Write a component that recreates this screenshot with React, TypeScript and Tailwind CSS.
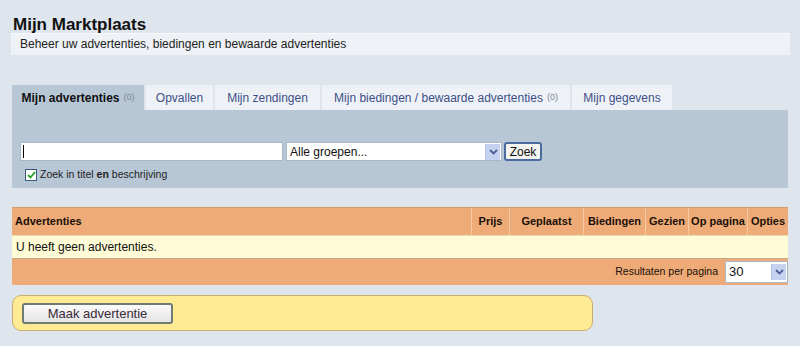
import React from 'react';

const tabs = [
    {label: 'Mijn advertenties', count: '(0)', width: 'w-[132px]', active: true},
    {label: 'Opvallen', width: 'w-[67px]'},
    {label: 'Mijn zendingen', width: 'w-[105px]'},
    {label: 'Mijn biedingen / bewaarde advertenties', count: '(0)', width: 'w-[248px]'},
    {label: 'Mijn gegevens', width: 'w-[100px]'},
];

const columns = [
    {label: 'Prijs', width: 'w-[38px]'},
    {label: 'Geplaatst', width: 'w-[74px]'},
    {label: 'Biedingen', width: 'w-[62px]'},
    {label: 'Gezien', width: 'w-[43px]'},
    {label: 'Op pagina', width: 'w-[59px]'},
    {label: 'Opties', width: 'w-[40px]'},
];

function SelectArrow() {
    return (
        <span className="w-[15px] h-[16px] flex items-center justify-center bg-[#c6d3f0] border-l border-[#b3c3e6]">
            <svg width="9" height="6" viewBox="0 0 9 6">
                <path d="M1 1 L4.5 4.5 L8 1" stroke="#4b5f99" strokeWidth="1.8" fill="none"/>
            </svg>
        </span>
    );
}

export default function App() {
    return (
        <div
            className="w-[800px] h-[346px] bg-[#dfe5ed] overflow-hidden text-black"
            style={{fontFamily: '"Liberation Sans", Arial, sans-serif'}}
        >
            <div className="pl-[13px] pt-[15px] h-[33px] text-[17px] font-bold leading-[20px] text-[#111]">
                Mijn Marktplaats
            </div>
            <div className="ml-[11px] w-[779px] h-[22px] bg-[#eef1f5] border-t border-[#f7f9fb] pl-[9px] text-[12px] leading-[20px] text-[#222]">
                Beheer uw advertenties, biedingen en bewaarde advertenties
            </div>

            <div className="ml-[12px] w-[776px] mt-[30px]">
                <div className="flex gap-[2px] h-[25px]">
                    {tabs.map(tab => (
                        <div
                            key={tab.label}
                            className={`${tab.width} h-[25px] flex items-center justify-center text-[12px] ${tab.active ? 'bg-[#b8c7d6] font-bold text-[#111]' : 'bg-[#eef2f6] text-[#3d4f88]'}`}
                        >
                            {tab.label}
                            {tab.count && (
                                <span className="ml-[4px] text-[9px] font-normal text-[#7d8794]">{tab.count}</span>
                            )}
                        </div>
                    ))}
                </div>
                <div className="h-[78px] bg-[#b8c7d6] pt-[32px] pl-[8px]">
                    <div className="flex items-center h-[19px]">
                        <div className="w-[263px] h-[19px] bg-white border border-[#a9b7c6] flex items-center pl-[2px]">
                            <span className="w-px h-[13px] bg-black"/>
                        </div>
                        <div className="ml-[3px] w-[216px] h-[19px] bg-white border border-[#a9b7c6] flex items-center justify-between pr-px">
                            <span className="pl-[3px] text-[12px] text-[#111]">Alle groepen...</span>
                            <SelectArrow/>
                        </div>
                        <button className="ml-[2px] w-[38px] h-[19px] bg-[#f3f3f0] border-2 border-[#4b6ba0] rounded-[3px] text-[12px] leading-[14px] text-[#111]">
                            Zoek
                        </button>
                    </div>
                    <div className="flex items-center mt-[7px] pl-[5px] h-[13px]">
                        <span className="w-[12px] h-[12px] bg-white border border-[#3a5a7a] flex items-center justify-center">
                            <svg width="9" height="8" viewBox="0 0 9 8">
                                <path d="M1 4 L3.5 6.5 L8 1" stroke="#21a121" strokeWidth="1.8" fill="none"/>
                            </svg>
                        </span>
                        <span className="ml-[3px] text-[10.5px] text-[#222]">
                            Zoek in titel <b>en</b> beschrijving
                        </span>
                    </div>
                </div>

                <div className="mt-[19px] border-t border-[#d49a6a]">
                    <div className="h-[27px] bg-[#eeab78] flex text-[11px] font-bold text-[#1a1008]">
                        <div className="flex-1 flex items-center pl-[3px] border-r border-[#f6c9a3]">Advertenties</div>
                        {columns.map((col, i) => (
                            <div
                                key={col.label}
                                className={`${col.width} flex items-center justify-center ${i < columns.length - 1 ? 'border-r border-[#f6c9a3]' : ''}`}
                            >
                                {col.label}
                            </div>
                        ))}
                    </div>
                    <div className="h-[23px] bg-[#fffbd6] border-t border-[#e8d9b0] flex items-center pl-[4px] text-[12px] text-[#111]">
                        U heeft geen advertenties.
                    </div>
                    <div className="h-[27px] bg-[#eeab78] border-t border-[#c9a88a] flex items-center justify-end">
                        <span className="text-[10.5px] text-[#1a1008] mr-[7px]">Resultaten per pagina</span>
                        <div className="w-[63px] h-[22px] bg-white border border-[#a9b7c6] flex items-center justify-between pr-px">
                            <span className="pl-[3px] text-[13px] text-[#111]">30</span>
                            <SelectArrow/>
                        </div>
                    </div>
                </div>

                <div className="mt-[10px] w-[581px] h-[36px] bg-[#ffeb94] border border-[#c9ad6e] rounded-[9px] flex items-center pl-[9px]">
                    <button className="w-[151px] h-[21px] bg-gradient-to-b from-[#fafafa] to-[#e4e4e4] border-2 border-[#6e7a74] rounded-[3px] text-[13px] leading-[15px] text-[#3a2a3a]">
                        Maak advertentie
                    </button>
                </div>
            </div>
        </div>
    );
}
